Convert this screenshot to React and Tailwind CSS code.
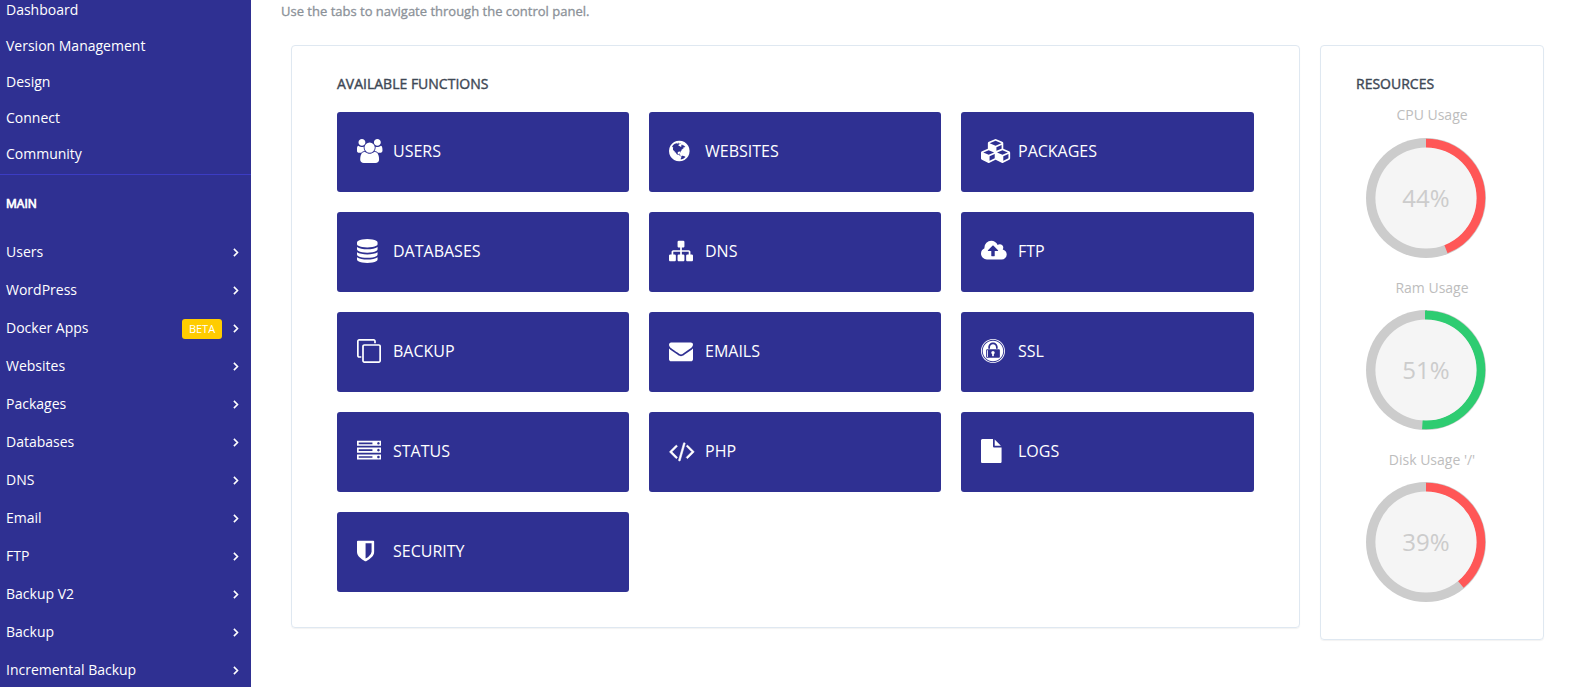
import React from "react";
import { FaExpeditedssl } from "react-icons/fa";

const PATHS = {
  users:
    "M657 896q-162 5-265 128h-134q-82 0-138-40.5t-56-118.5q0-353 124-353 6 0 43.5 21t97.5 42.5 119 21.5q67 0 133-23-5 37-5 66 0 139 81 256zm1071 637q0 120-73 189.5t-194 69.5h-874q-121 0-194-69.5t-73-189.5q0-53 3.5-103.5t14-109 26.5-108.5 43-97.5 62-81 85.5-53.5 111.5-20q10 0 43 21.5t73 48 107 48 135 21.5 135-21.5 107-48 73-48 43-21.5q61 0 111.5 20t85.5 53.5 62 81 43 97.5 26.5 108.5 14 109 3.5 103.5zm-1024-1277q0 106-75 181t-181 75-181-75-75-181 75-181 181-75 181 75 75 181zm704 384q0 159-112.5 271.5t-271.5 112.5-271.5-112.5-112.5-271.5 112.5-271.5 271.5-112.5 271.5 112.5 112.5 271.5zm576 225q0 78-56 118.5t-138 40.5h-134q-103-123-265-128 81-117 81-256 0-29-5-66 66 23 133 23 59 0 119-21.5t97.5-42.5 43.5-21q124 0 124 353zm-128-609q0 106-75 181t-181 75-181-75-75-181 75-181 181-75 181 75 75 181z",
  globe:
    "M896 128q209 0 385.5 103t279.5 279.5 103 385.5-103 385.5-279.5 279.5-385.5 103-385.5-103-279.5-279.5-103-385.5 103-385.5 279.5-279.5 385.5-103zm274 521q-2 1-9.5 9.5t-13.5 9.5q2 0 4.5-5t5-11 3.5-7q6-7 22-15 14-6 52-12 34-8 51 11-2-2 9.5-13t14.5-12q3-2 15-4.5t15-7.5l2-22q-12 1-17.5-7t-6.5-21q0 2-6 8 0-7-4.5-8t-11.5 1-9 1q-10-3-15-7.5t-8-16.5-4-15q-2-5-9.5-11t-9.5-10q-1-2-2.5-5.5t-3-6.5-4-5.5-5.5-2.5-7 5-7.5 10-4.5 5q-3-2-6-1.5t-4.5 1-4.5 3-5 3.5q-3 2-8.5 3t-8.5 2q15-5-1-11-10-4-16-3 9-4 7.5-12t-8.5-14h5q-1-4-8.5-8.5t-17.5-8.5-13-6q-8-5-34-9.5t-33-.5q-5 6-4.5 10.5t4 14 3.5 12.5q1 6-5.5 13t-6.5 12q0 7 14 15.5t10 21.5q-3 8-16 16t-16 12q-5 8-1.5 18.5t10.5 16.5q2 2 1.5 4t-3.5 4.5-5.5 4-6.5 3.5l-3 2q-11 5-20.5-6t-13.5-26q-7-25-16-30-23-8-29 1-5-13-41-26-25-9-58-4 6-1 0-15-7-15-19-12 3-6 4-17.5t1-13.5q3-13 12-23 1-1 7-8.5t9.5-13.5.5-6q35 4 50-11 5-5 11.5-17t10.5-17q9-6 14-5.5t14.5 5.5 14.5 5q14 1 15.5-11t-7.5-20q12 1 3-17-4-7-8-9-12-4-27 5-8 4 2 8-1-1-9.5 10.5t-16.5 17.5-16-5q-1-1-5.5-13.5t-9.5-13.5q-8 0-16 15 3-8-11-15t-24-8q19-12-8-27-7-4-20.5-5t-19.5 4q-5 7-5.5 11.5t5 8 10.5 5.5 11.5 4 8.5 3q14 10 8 14-2 1-8.5 3.5t-11.5 4.5-6 4q-3 4 0 14t-2 14q-5-5-9-17.5t-7-16.5q7 9-25 6l-10-1q-4 0-16 2t-20.5 1-13.5-8q-4-8 0-20 1-4 4-2-4-3-11-9.5t-10-8.5q-46 15-94 41 6 1 12-1 5-2 13-6.5t10-5.5q34-14 42-7l5-5q14 16 20 25-7-4-30-1-20 6-22 12 7 12 5 18-4-3-11.5-10t-14.5-11-15-5q-16 0-22 1-146 80-235 222 7 7 12 8 4 1 5 9t2.5 11 11.5-3q9 8 3 19 1-1 44 27 19 17 21 21 3 11-10 18-1-2-9-9t-9-4q-3 5 .5 18.5t10.5 12.5q-7 0-9.5 16t-2.5 35.5-1 23.5l2 1q-3 12 5.5 34.5t21.5 19.5q-13 3 20 43 6 8 8 9 3 2 12 7.5t15 10 10 10.5q4 5 10 22.5t14 23.5q-2 6 9.5 20t10.5 23q-1 0-2.5 1t-2.5 1q3 7 15.5 14t15.5 13q1 3 2 10t3 11 8 2q2-20-24-62-15-25-17-29-3-5-5.5-15.5t-4.5-14.5q2 0 6 1.5t8.5 3.5 7.5 4 2 3q-3 7 2 17.5t12 18.5 17 19 12 13q6 6 14 19.5t0 13.5q9 0 20 10.5t17 19.5q5 8 8 26t5 24q2 7 8.5 13.5t12.5 9.5l16 8 13 7q5 2 18.5 10.5t21.5 11.5q10 4 16 4t14.5-2.5 13.5-3.5q15-2 29 15t21 21q36 19 55 11-2 1 .5 7.5t8 15.5 9 14.5 5.5 8.5q5 6 18 15t18 15q6-4 7-9-3 8 7 20t18 10q14-3 14-32-31 15-49-18 0-1-2.5-5.5t-4-8.5-2.5-8.5 0-7.5 5-3q9 0 10-3.5t-2-12.5-4-13q-1-8-11-20t-12-15q-5 9-16 8t-16-9q0 1-1.5 5.5t-1.5 6.5q-13 0-15-1 1-3 2.5-17.5t3.5-22.5q1-4 5.5-12t7.5-14.5 4-12.5-4.5-9.5-17.5-2.5q-19 1-26 20-1 3-3 10.5t-5 11.5-9 7q-7 3-24 2t-24-5q-13-8-22.5-29t-9.5-37q0-10 2.5-26.5t3-25-5.5-24.5q3-2 9-9.5t10-10.5q2-1 4.5-1.5t4.5 0 4-1.5 3-6q-1-1-4-3-3-3-4-3 7 3 28.5-1.5t27.5 1.5q15 11 22-2 0-1-2.5-9.5t-.5-13.5q5 27 29 9 3 3 15.5 5t17.5 5q3 2 7 5.5t5.5 4.5 5-.5 8.5-6.5q10 14 12 24 11 40 19 44 7 3 11 2t4.5-9.5 0-14-1.5-12.5l-1-8v-18l-1-8q-15-3-18.5-12t1.5-18.5 15-18.5q1-1 8-3.5t15.5-6.5 12.5-8q21-19 15-35 7 0 11-9-1 0-5-3t-7.5-5-4.5-2q9-5 2-16 5-3 7.5-11t7.5-10q9 12 21 2 8-8 1-16 5-7 20.5-10.5t18.5-9.5q7 2 8-2t1-12 3-12q4-5 15-9t13-5l17-11q3-4 0-4 18 2 31-11 10-11-6-20 3-6-3-9.5t-15-5.5q3-1 11.5-.5t10.5-1.5q15-10-7-16-17-5-43 12zm-163 877q206-36 351-189-3-3-12.5-4.5t-12.5-3.5q-18-7-24-8 1-7-2.5-13t-8-9-12.5-8-11-7q-2-2-7-6t-7-5.5-7.5-4.5-8.5-2-10 1l-3 1q-3 1-5.5 2.5t-5.5 3-4 3 0 2.5q-21-17-36-22-5-1-11-5.5t-10.5-7-10-1.5-11.5 7q-5 5-6 15t-2 13q-7-5 0-17.5t2-18.5q-3-6-10.5-4.5t-12 4.5-11.5 8.5-9 6.5-8.5 5.5-8.5 7.5q-3 4-6 12t-5 11q-2-4-11.5-6.5t-9.5-5.5q2 10 4 35t5 38q7 31-12 48-27 25-29 40-4 22 12 26 0 7-8 20.5t-7 21.5q0 6 2 16z",
  cubes:
    "M640 1632l384-192v-314l-384 164v342zm-64-454l404-173-404-173-404 173zm1088 454l384-192v-314l-384 164v342zm-64-454l404-173-404-173-404 173zm-448-293l384-165v-266l-384 164v267zm-64-379l441-189-441-189-441 189zm1088 518v416q0 36-19 67t-52 47l-448 224q-25 14-57 14t-57-14l-448-224q-4-2-7-4-2 2-7 4l-448 224q-25 14-57 14t-57-14l-448-224q-33-16-52-47t-19-67v-416q0-38 21.5-70t56.5-48l434-186v-400q0-38 21.5-70t56.5-48l448-192q23-10 50-10t50 10l448 192q35 16 56.5 48t21.5 70v400l434 186q36 16 57 48t21 70z",
  database:
    "M896 768q237 0 443-43t325-127v170q0 69-103 128t-280 93.5-385 34.5-385-34.5-280-93.5-103-128v-170q119 84 325 127t443 43zm0 768q237 0 443-43t325-127v170q0 69-103 128t-280 93.5-385 34.5-385-34.5-280-93.5-103-128v-170q119 84 325 127t443 43zm0-384q237 0 443-43t325-127v170q0 69-103 128t-280 93.5-385 34.5-385-34.5-280-93.5-103-128v-170q119 84 325 127t443 43zm0-1152q208 0 385 34.5t280 93.5 103 128v128q0 69-103 128t-280 93.5-385 34.5-385-34.5-280-93.5-103-128v-128q0-69 103-128t280-93.5 385-34.5z",
  sitemap:
    "M1792 1248v320q0 40-28 68t-68 28h-320q-40 0-68-28t-28-68v-320q0-40 28-68t68-28h96v-192h-512v192h96q40 0 68 28t28 68v320q0 40-28 68t-68 28h-320q-40 0-68-28t-28-68v-320q0-40 28-68t68-28h96v-192h-512v192h96q40 0 68 28t28 68v320q0 40-28 68t-68 28h-320q-40 0-68-28t-28-68v-320q0-40 28-68t68-28h96v-192q0-52 38-90t90-38h512v-192h-96q-40 0-68-28t-28-68v-320q0-40 28-68t68-28h320q40 0 68 28t28 68v320q0 40-28 68t-68 28h-96v192h512q52 0 90 38t38 90v192h96q40 0 68 28t28 68z",
  cloud:
    "M1280 864q0-14-9-23l-352-352q-9-9-23-9t-23 9l-351 351q-10 12-10 24 0 14 9 23t23 9h224v352q0 13 9.5 22.5t22.5 9.5h192q13 0 22.5-9.5t9.5-22.5v-352h224q13 0 22.5-9.5t9.5-22.5zm640 288q0 159-112.5 271.5t-271.5 112.5h-1088q-185 0-316.5-131.5t-131.5-316.5q0-130 70-240t188-165q-2-30-2-43 0-212 150-362t362-150q156 0 285.5 87t188.5 231q71-62 166-62 106 0 181 75t75 181q0 76-41 138 130 31 213.5 135.5t83.5 238.5z",
  clone:
    "M1664 1632v-1088q0-13-9.5-22.5t-22.5-9.5h-1088q-13 0-22.5 9.5t-9.5 22.5v1088q0 13 9.5 22.5t22.5 9.5h1088q13 0 22.5-9.5t9.5-22.5zm128-1088v1088q0 66-47 113t-113 47h-1088q-66 0-113-47t-47-113v-1088q0-66 47-113t113-47h1088q66 0 113 47t47 113zm-384-384v160h-128v-160q0-13-9.5-22.5t-22.5-9.5h-1088q-13 0-22.5 9.5t-9.5 22.5v1088q0 13 9.5 22.5t22.5 9.5h160v128h-160q-66 0-113-47t-47-113v-1088q0-66 47-113t113-47h1088q66 0 113 47t47 113z",
  envelope:
    "M1792 710v794q0 66-47 113t-113 47h-1472q-66 0-113-47t-47-113v-794q44 49 101 87 362 246 497 345 57 42 92.5 65.5t94.5 48 110 24.5h2q51 0 110-24.5t94.5-48 92.5-65.5q170-123 498-345 57-39 100-87zm0-294q0 79-49 151t-122 123q-376 261-468 325-10 7-42.5 31t-54 38.5-52 32.5-57.5 27-50 9h-2q-23 0-50-9t-57.5-27-52-32.5-54-38.5-42.5-31q-91-64-262-182.5t-205-142.5q-62-42-117-115.5t-55-136.5q0-78 41.5-130t118.5-52h1472q65 0 112.5 47t47.5 113z",
  server:
    "M128 1408h1024v-128h-1024v128zm0-512h1024v-128h-1024v128zm1568 448q0-40-28-68t-68-28-68 28-28 68 28 68 68 28 68-28 28-68zm-1568-960h1024v-128h-1024v128zm1568 448q0-40-28-68t-68-28-68 28-28 68 28 68 68 28 68-28 28-68zm0-512q0-40-28-68t-68-28-68 28-28 68 28 68 68 28 68-28 28-68zm96 832v384h-1792v-384h1792zm0-512v384h-1792v-384h1792zm0-512v384h-1792v-384h1792z",
  code:
    "M681 1399l-50 50q-10 10-23 10t-23-10l-466-466q-10-10-10-23t10-23l466-466q10-10 23-10t23 10l50 50q10 10 10 23t-10 23l-393 393 393 393q10 10 10 23t-10 23zm591-1067l-373 1291q-4 13-15.5 19.5t-23.5 2.5l-62-17q-13-4-19.5-15.5t-2.5-24.5l373-1291q4-13 15.5-19.5t23.5-2.5l62 17q13 4 19.5 15.5t2.5 24.5zm657 651l-466 466q-10 10-23 10t-23-10l-50-50q-10-10-10-23t10-23l393-393-393-393q-10-10-10-23t10-23l50-50q10-10 23-10t23 10l466 466q10 10 10 23t-10 23z",
  file:
    "M1152 512v-472q22 14 36 28l408 408q14 14 28 36h-472zm-128 32q0 40 28 68t68 28h544v1056q0 40-28 68t-68 28h-1344q-40 0-68-28t-28-68v-1600q0-40 28-68t68-28h800v544z",
  shield:
    "M1344 960v-640h-448v1137q119-63 213-137 235-184 235-360zm192-768v768q0 86-33.5 170.5t-83 150-118 127.5-126.5 103-121 77.5-89.5 49.5-42.5 20q-12 6-26 6t-26-6q-16-7-42.5-20t-89.5-49.5-121-77.5-126.5-103-118-127.5-83-150-33.5-170.5v-768q0-26 19-45t45-19h1152q26 0 45 19t19 45z",
};

const TILES = [
  { label: "USERS", icon: "users", x: 80 },
  { label: "WEBSITES", icon: "globe", x: 128 },
  { label: "PACKAGES", icon: "cubes", x: 0 },
  { label: "DATABASES", icon: "database", x: 128 },
  { label: "DNS", icon: "sitemap", x: 0 },
  { label: "FTP", icon: "cloud", x: 0 },
  { label: "BACKUP", icon: "clone", x: 0 },
  { label: "EMAILS", icon: "envelope", x: 0 },
  { label: "SSL", icon: "ssl", x: 0 },
  { label: "STATUS", icon: "server", x: 0 },
  { label: "PHP", icon: "code", x: 64, heavy: true },
  { label: "LOGS", icon: "file", x: 128 },
  { label: "SECURITY", icon: "shield", x: 256 },
];

const TOP_LINKS = ["Dashboard", "Version Management", "Design", "Connect", "Community"];

const MAIN_LINKS = [
  { label: "Users" },
  { label: "WordPress" },
  { label: "Docker Apps", badge: "BETA" },
  { label: "Websites" },
  { label: "Packages" },
  { label: "Databases" },
  { label: "DNS" },
  { label: "Email" },
  { label: "FTP" },
  { label: "Backup V2" },
  { label: "Backup" },
  { label: "Incremental Backup" },
];

const GAUGES = [
  { label: "CPU Usage", value: 44, color: "#ff5757" },
  { label: "Ram Usage", value: 51, color: "#2ecc71" },
  { label: "Disk Usage '/'", value: 39, color: "#ff5757" },
];

function Chevron() {
  return (
    <svg
      className="mt-px h-[9px] w-1.5 shrink-0"
      viewBox="0 0 6 9"
      fill="none"
      stroke="currentColor"
      strokeWidth="1.6"
    >
      <path d="M0.9 0.9L4.5 4.5L0.9 8.1" />
    </svg>
  );
}

function Sidebar() {
  return (
    <aside className="flex h-full w-[251px] shrink-0 flex-col overflow-hidden bg-[#2f3092] text-sm text-white">
      <nav className="-mt-2 flex flex-col">
        {TOP_LINKS.map((label) => (
          <a key={label} className="h-9 shrink-0 pl-1.5 leading-9">
            {label}
          </a>
        ))}
      </nav>
      <div className="mt-[2px] h-px shrink-0 bg-[#3c3cc4]" />
      <h2 className="mt-5 h-[18px] shrink-0 pl-1.5 text-xs leading-[18px] [-webkit-text-stroke:0.7px_white]">
        MAIN
      </h2>
      <nav className="mt-5 flex flex-col">
        {MAIN_LINKS.map(({ label, badge }) => (
          <a key={label} className="flex h-[38px] shrink-0 items-center pr-3 pl-1.5">
            <span className="flex-1 leading-[38px]">{label}</span>
            {badge && (
              <span className="mt-0.5 mr-[11px] h-5 w-10 rounded-[3px] bg-[#ffcc00] text-center text-[11px] leading-5">
                {badge}
              </span>
            )}
            <Chevron />
          </a>
        ))}
      </nav>
    </aside>
  );
}

function Tile({ label, icon, x, heavy }) {
  return (
    <a className="group flex h-20 items-center rounded-[3px] bg-[#2f3092] pl-5 text-white">
      <span className="flex h-6 w-9 shrink-0 items-center">
        {icon === "ssl" ? (
          <FaExpeditedssl className="-mt-0.5 h-6 w-6" viewBox="0 8 496 496" />
        ) : (
          <svg className="-mt-0.5 h-6 w-8" viewBox={`${x} 0 2389.333 1792`} fill="currentColor">
            <path d={PATHS[icon]} stroke="currentColor" strokeWidth={heavy ? 40 : 0} />
          </svg>
        )}
      </span>
      <span className="-mt-0.5 text-base leading-6 group-[:nth-child(3n)]:ml-px">{label}</span>
    </a>
  );
}

function Gauge({ label, value, color }) {
  const r = 54.7;
  const c = 2 * Math.PI * r;
  return (
    <div className="group flex h-[172px] flex-col">
      <div className="h-5 text-center text-sm leading-5 text-[#bdbdbd] group-[:not(:nth-child(2))]:leading-[22px]">
        {label}
      </div>
      <div className="mt-[13px] ml-2.5 grid h-[120px] w-[120px] place-items-center">
        <svg className="col-start-1 row-start-1 h-[120px] w-[120px]" viewBox="0 0 120 120">
          <circle cx="60" cy="60" r="60" fill="#cccccc" />
          <circle
            cx="60"
            cy="60"
            r={r}
            fill="none"
            stroke={color}
            strokeWidth="9.2"
            strokeDasharray={`${(c * value) / 100} ${c}`}
            transform="rotate(-90 60 60)"
          />
          {value > 50 && <rect x="59" y="0.5" width="2" height="9.4" fill={color} />}
          <circle cx="60" cy="60" r="50.6" fill="#f5f5f5" />
        </svg>
        <span className="col-start-1 row-start-1 text-2xl text-[#cccccc]">{value}%</span>
      </div>
    </div>
  );
}

export default function App() {
  return (
    <div className="flex h-[687px] w-[1569px] overflow-hidden bg-white font-['Open_Sans','Noto_Sans',sans-serif]">
      <Sidebar />
      <main className="flex flex-1 flex-col pl-[30px]">
        <p className="mt-px h-5 text-[13px] leading-5 text-[#8b9198] [-webkit-text-stroke:0.3px_#8b9198]">
          Use the tabs to navigate through the control panel.
        </p>
        <div className="mt-6 ml-2.5 flex items-start gap-5">
          <section className="h-[583px] w-[1009px] rounded border border-[#dfe8f1] px-[45px] pt-[27px] shadow-[0_1px_1px_rgba(0,0,0,0.05)]">
            <h3 className="mb-[17px] h-[22px] text-sm leading-[22px] text-[#3e4855] [-webkit-text-stroke:0.4px_#3e4855]">
              AVAILABLE FUNCTIONS
            </h3>
            <div className="grid grid-cols-[292px_292px_293px] gap-5">
              {TILES.map((t) => (
                <Tile key={t.label} {...t} />
              ))}
            </div>
          </section>
          <section className="h-[595px] w-[224px] rounded border border-[#dfe8f1] px-[35px] pt-[27px] shadow-[0_1px_1px_rgba(0,0,0,0.05)]">
            <h3 className="mb-2.5 h-[22px] text-sm leading-[22px] text-[#3e4855] [-webkit-text-stroke:0.4px_#3e4855]">
              RESOURCES
            </h3>
            {GAUGES.map((g) => (
              <Gauge key={g.label} {...g} />
            ))}
          </section>
        </div>
      </main>
    </div>
  );
}
